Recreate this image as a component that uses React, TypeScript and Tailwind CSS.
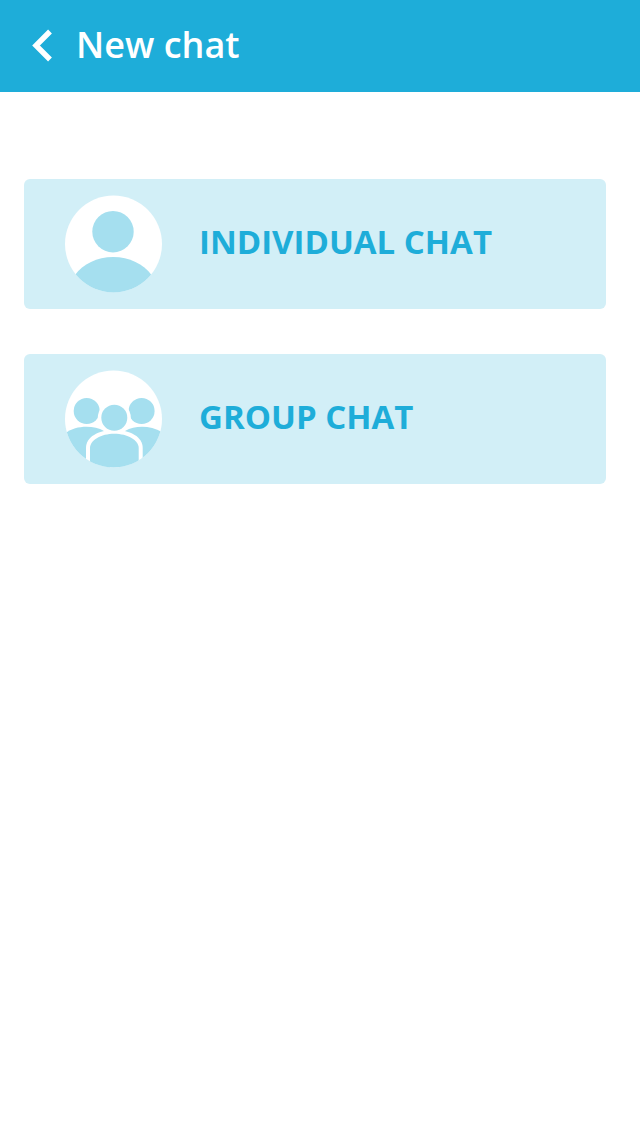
import type { ReactNode } from 'react';

function PersonIcon() {
  return (
    <svg viewBox="0 0 98 98" className="size-[98px] shrink-0" aria-hidden="true">
      <defs>
        <clipPath id="person-clip">
          <circle cx="49.5" cy="49" r="48.5" />
        </clipPath>
      </defs>
      <circle cx="49.5" cy="49" r="48.5" fill="#fff" />
      <g fill="#a5dfef" clipPath="url(#person-clip)">
        <circle cx="49" cy="36.7" r="20.7" />
        <path d="M11 80C19 69 33 62 49.2 62S79.5 69 87.5 80V98H11Z" />
      </g>
    </svg>
  );
}

function GroupIcon() {
  return (
    <svg viewBox="0 0 98 98" className="size-[98px] shrink-0" aria-hidden="true">
      <defs>
        <clipPath id="group-clip">
          <circle cx="49.5" cy="49" r="48.5" />
        </clipPath>
      </defs>
      <circle cx="49.5" cy="49" r="48.5" fill="#fff" />
      <g fill="#a5dfef" clipPath="url(#group-clip)">
        <circle cx="22.7" cy="41" r="13" />
        <circle cx="77.6" cy="41" r="13" />
        <path d="M0 64C7 59 14 56.8 22.5 56.8C29 56.8 35 58 40 61L46 66V98H0Z" />
        <path d="M101 64C94 59 86 56.8 78 56.8C72 56.8 66 58 61 61L55 66V98H101Z" />
        <circle cx="50.3" cy="47.8" r="16.5" fill="#fff" />
        <path d="M22 98V78C22 67 34 60 50.3 60S78.7 67 78.7 78V98Z" fill="#fff" />
        <path d="M26 98V78C26 70 37 63.7 50.3 63.7S74.7 70 74.7 78V98Z" />
        <circle cx="50.3" cy="47.8" r="13" />
      </g>
    </svg>
  );
}

function ChatOption({ icon, label }: { icon: ReactNode; label: string }) {
  return (
    <button type="button" className="flex h-[130px] w-full items-center gap-[37px] rounded-md bg-[#d2eff7] pl-10 text-left">
      {icon}
      <span className="pb-1 text-[33px] leading-10 font-bold">{label}</span>
    </button>
  );
}

export default function App() {
  return (
    <div className="min-h-screen bg-white font-['Open_Sans',sans-serif] text-[#1eadd9]">
      <header className="flex h-[92px] items-center bg-[#1eadd9] pl-8 text-white">
        <button type="button" aria-label="Back" className="mr-6">
          <svg viewBox="0 0 20 32" className="h-8 w-5 overflow-visible" fill="none" stroke="currentColor" strokeWidth="5.4" aria-hidden="true">
            <path d="M18 1.500 4 15.500 18 29.500" />
          </svg>
        </button>
        <h1 className="pb-0.5 text-4xl font-semibold">New chat</h1>
      </header>
      <main className="flex flex-col gap-[45px] pt-[87px] pr-[34px] pl-6">
        <ChatOption icon={<PersonIcon />} label="INDIVIDUAL CHAT" />
        <ChatOption icon={<GroupIcon />} label="GROUP CHAT" />
      </main>
    </div>
  );
}
